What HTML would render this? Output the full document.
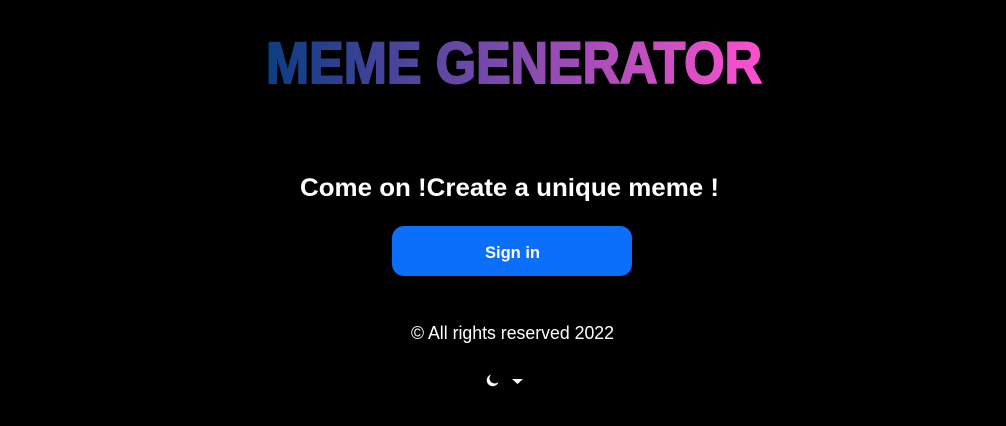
<!DOCTYPE html>
<html><head><style>
html,body{margin:0;background:#000;width:1006px;height:426px;overflow:hidden;font-family:"Liberation Sans",sans-serif}
svg{position:absolute;left:0;top:0}
.btn{position:absolute;left:392px;top:226px;width:240px;height:50px;background:#0b6ffc;border-radius:12px}
</style></head><body>
<div class="btn"></div>
<svg width="1006" height="426">
<defs><linearGradient id="g" x1="265" x2="763" gradientUnits="userSpaceOnUse">
<stop offset="0" stop-color="#0a3d82"/><stop offset="0.4" stop-color="#6a48a8"/><stop offset="0.75" stop-color="#c04fc0"/><stop offset="1" stop-color="#ff4fd0"/></linearGradient></defs>
<text x="266" y="83" font-size="58" font-weight="bold" fill="url(#g)" stroke="url(#g)" stroke-width="2" textLength="496" lengthAdjust="spacingAndGlyphs" font-family="Liberation Sans">MEME GENERATOR</text>
<text x="300" y="196" font-size="25" font-weight="bold" fill="#fff" textLength="419" lengthAdjust="spacingAndGlyphs" font-family="Liberation Sans">Come on !Create a unique meme !</text>
<text x="485" y="258" font-size="17" font-weight="bold" fill="#fff" textLength="55" lengthAdjust="spacingAndGlyphs" font-family="Liberation Sans">Sign in</text>
<text x="411" y="339" font-size="18" fill="#fff" textLength="203" lengthAdjust="spacingAndGlyphs" font-family="Liberation Sans">© All rights reserved 2022</text>
<path d="M491 374.5 A6 6 0 1 0 498.5 382 A4 4 0 0 1 491 374.5z" fill="#fff"/>
<path d="M512 379 h11 l-5.5 5z" fill="#fff"/>
</svg>
</body></html>
